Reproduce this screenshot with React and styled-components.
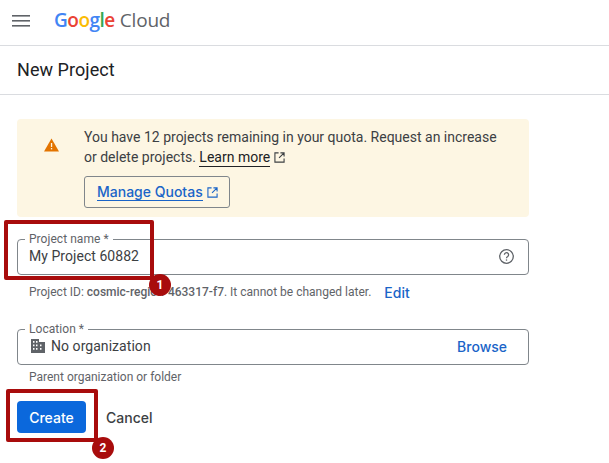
import React from "react"
import styled, { createGlobalStyle } from "styled-components"

const GlobalStyle = createGlobalStyle`
  html, body {
    margin: 0;
    padding: 0;
    background: #fff;
    font-family: Roboto, "Liberation Sans", sans-serif;
  }
`

const Page = styled.div`
  position: relative;
  width: 609px;
  height: 463px;
  overflow: hidden;
  color: #3c4043;
`

const TopBar = styled.header`
  height: 45px;
  display: flex;
  align-items: center;
  padding-left: 12px;
  border-bottom: 1px solid #dadce0;
`

const Menu = styled.svg`
  width: 18px;
  height: 12px;
  margin-right: 24px;
  margin-top: -3px;
`

const Logo = styled.div`
  display: flex;
  align-items: baseline;
  font-family: "Open Sans", sans-serif;
  font-size: 19px;
  letter-spacing: -0.5px;
  margin-top: -5px;
`

const Letter = styled.span`
  color: ${p => p.$color};
  font-weight: 600;
`

const Cloud = styled.span`
  color: #5f6368;
  margin-left: 5px;
  letter-spacing: -0.2px;
`

const TitleBar = styled.div`
  height: 49px;
  display: flex;
  align-items: center;
  padding-left: 17px;
  padding-bottom: 2px;
  box-sizing: border-box;
  border-bottom: 1px solid #dadce0;
`

const Title = styled.h1`
  margin: 0;
  font-size: 18px;
  font-weight: 400;
  letter-spacing: 0.05px;
  color: #202124;
`

const Content = styled.main`
  width: 512px;
  margin-left: 17px;
  padding-top: 24px;
`

const Notice = styled.section`
  height: 98px;
  box-sizing: border-box;
  display: flex;
  padding: 8px 0 0 27px;
  background: #fdf6e3;
  border-radius: 4px;
`

const WarnIcon = styled.svg`
  width: 15px;
  height: 14px;
  margin-top: 11px;
  margin-right: 25px;
  flex: none;
`

const NoticeBody = styled.div`
  font-size: 14px;
  line-height: 20px;
  color: #3c4043;
`

const LearnMore = styled.span`
  color: #202124;
  border-bottom: 1px solid #202124;
  padding-bottom: 1px;
`

const QuotaButton = styled.div`
  display: inline-flex;
  align-items: center;
  width: 146px;
  height: 32px;
  box-sizing: border-box;
  margin-top: 9px;
  padding-left: 12px;
  border: 1px solid #80868b;
  border-radius: 3px;
  color: #1a64c8;
  font-family: Inter, Roboto, sans-serif;
  font-weight: 500;
  font-size: 14px;
`

const Underlined = styled.span`
  border-bottom: 1px solid #1a64c8;
  line-height: 17px;
`

const External = styled.svg`
  width: 11px;
  height: 11px;
  margin-left: 4px;
  vertical-align: -1px;
`

const Field = styled.div`
  position: relative;
  height: 36px;
  box-sizing: border-box;
  margin-top: ${p => p.$top}px;
  display: flex;
  align-items: center;
  padding: 0 12px 2px 11px;
  border: 1px solid #80868b;
  border-radius: 4px;
  font-size: 14px;
  letter-spacing: 0.05px;
  color: #3c4043;
`

const FieldLabel = styled.label`
  position: absolute;
  left: 7px;
  top: -8px;
  padding: 0 4px;
  background: #fff;
  font-size: 12px;
  line-height: 14px;
  letter-spacing: 0.05px;
  color: #5f6368;
`

const Grow = styled.span`
  flex: 1;
`

const HelpIcon = styled.svg`
  width: 17px;
  height: 17px;
  margin-right: 1px;
`

const OrgIcon = styled.svg`
  width: 14px;
  height: 14px;
  margin-left: 2px;
  margin-right: 6px;
  flex: none;
`

const Browse = styled.span`
  color: #1a64c8;
  font-family: Inter, Roboto, sans-serif;
  font-weight: 500;
  font-size: 14px;
  letter-spacing: 0;
  margin-right: 9px;
`

const Hint = styled.div`
  display: flex;
  align-items: center;
  margin-top: ${p => p.$top}px;
  padding-left: 12px;
  font-size: 12px;
  line-height: 16px;
  color: #5f6368;
`

const ProjectId = styled.b`
  font-weight: 500;
`

const Edit = styled.span`
  margin-left: 13px;
  margin-top: 2px;
  color: #1a64c8;
  font-family: Inter, Roboto, sans-serif;
  font-weight: 500;
  font-size: 14px;
  line-height: 16px;
`

const Actions = styled.div`
  display: flex;
  align-items: center;
  margin-top: 16px;
  gap: 20px;
`

const Primary = styled.button`
  width: 69px;
  height: 32px;
  padding: 0;
  border: 0;
  border-radius: 4px;
  background: #0b68dc;
  color: #fff;
  font: 500 14px Inter, Roboto, sans-serif;
`

const Secondary = styled.span`
  font-family: Inter, Roboto, sans-serif;
  font-size: 14px;
  font-weight: 500;
  color: #3c4043;
`

const Callout = styled.div`
  position: absolute;
  box-sizing: border-box;
  left: ${p => p.$x}px;
  top: ${p => p.$y}px;
  width: ${p => p.$w}px;
  height: ${p => p.$h}px;
  border: 4px solid #a80c0c;
  border-radius: 2px;
`

const Badge = styled.div`
  position: absolute;
  left: ${p => p.$x}px;
  top: ${p => p.$y}px;
  width: 22px;
  height: 22px;
  border-radius: 50%;
  background: #a80c0c;
  color: #fff;
  font-size: 12px;
  font-weight: 700;
  line-height: 22px;
  text-align: center;
`

const logoLetters = [
  ["G", "#4285f4"],
  ["o", "#ea4335"],
  ["o", "#fbbc05"],
  ["g", "#4285f4"],
  ["l", "#34a853"],
  ["e", "#ea4335"],
]

const ExternalIcon = ({ color }) => (
  <External viewBox="0 0 12 12" fill="none" stroke={color} strokeWidth="1.2">
    <path d="M5 1H1v10h10V7M7 1h4v4M11 1 5.5 6.5" />
  </External>
)

const App = () => {
  return (
    <Page>
      <GlobalStyle />
      <TopBar>
        <Menu viewBox="0 0 18 12" fill="#5f6368">
          <rect width="18" height="1.6" y="0" />
          <rect width="18" height="1.6" y="5" />
          <rect width="18" height="1.6" y="10" />
        </Menu>
        <Logo>
          <span>
            {logoLetters.map(([ch, color], i) => (
              <Letter key={i} $color={color}>{ch}</Letter>
            ))}
          </span>
          <Cloud>Cloud</Cloud>
        </Logo>
      </TopBar>
      <TitleBar>
        <Title>New Project</Title>
      </TitleBar>
      <Content>
        <Notice>
          <WarnIcon viewBox="0 0 15 14">
            <path d="M7.5 0.5 15 13.5H0Z" fill="#e37400" />
            <rect x="6.9" y="5" width="1.3" height="4" fill="#fdf6e3" />
            <rect x="6.9" y="10" width="1.3" height="1.4" fill="#fdf6e3" />
          </WarnIcon>
          <NoticeBody>
            You have 12 projects remaining in your quota. Request an increase
            <br />
            or delete projects. <LearnMore>Learn more</LearnMore>
            <ExternalIcon color="#3c4043" />
            <br />
            <QuotaButton>
              <Underlined>Manage Quotas</Underlined>
              <ExternalIcon color="#1a64c8" />
            </QuotaButton>
          </NoticeBody>
        </Notice>

        <Field $top={22}>
          <FieldLabel>Project name *</FieldLabel>
          <Grow>My Project 60882</Grow>
          <HelpIcon viewBox="0 0 17 17" fill="none" stroke="#5f6368" strokeWidth="1.3">
            <circle cx="8.5" cy="8.5" r="6.8" />
            <path d="M6.4 6.8a2.1 2.1 0 1 1 3.3 1.7c-.8.5-1.2 1-1.2 1.8" />
            <path d="M8.5 11.4v1.3" />
          </HelpIcon>
        </Field>
        <Hint $top={8}>
          <span>
            Project ID: <ProjectId>cosmic-region-463317-f7</ProjectId>. It cannot be changed later.
          </span>
          <Edit>Edit</Edit>
        </Hint>

        <Field $top={28}>
          <FieldLabel>Location *</FieldLabel>
          <OrgIcon viewBox="0 0 14 14">
            <path
              fill="#5f6368"
              fillRule="evenodd"
              d="M0 0h8v3h6v11H0ZM2 2v1.8h1.5V2Zm3 0v1.8h1.5V2ZM2 5.5v1.8h1.5V5.5Zm3 0v1.8h1.5V5.5ZM2 9v1.8h1.5V9Zm3 0v1.8h1.5V9Zm4-3.5v1.8h1.5V5.5ZM9 9v1.8h1.5V9Z"
            />
          </OrgIcon>
          <Grow>No organization</Grow>
          <Browse>Browse</Browse>
        </Field>
        <Hint $top={4}>Parent organization or folder</Hint>

        <Actions>
          <Primary>Create</Primary>
          <Secondary>Cancel</Secondary>
        </Actions>
      </Content>

      <Callout $x={4} $y={220} $w={150} $h={60} />
      <Badge $x={149} $y={274}>1</Badge>
      <Callout $x={6} $y={389} $w={92} $h={53} />
      <Badge $x={92} $y={437}>2</Badge>
    </Page>
  )
}

export default App
